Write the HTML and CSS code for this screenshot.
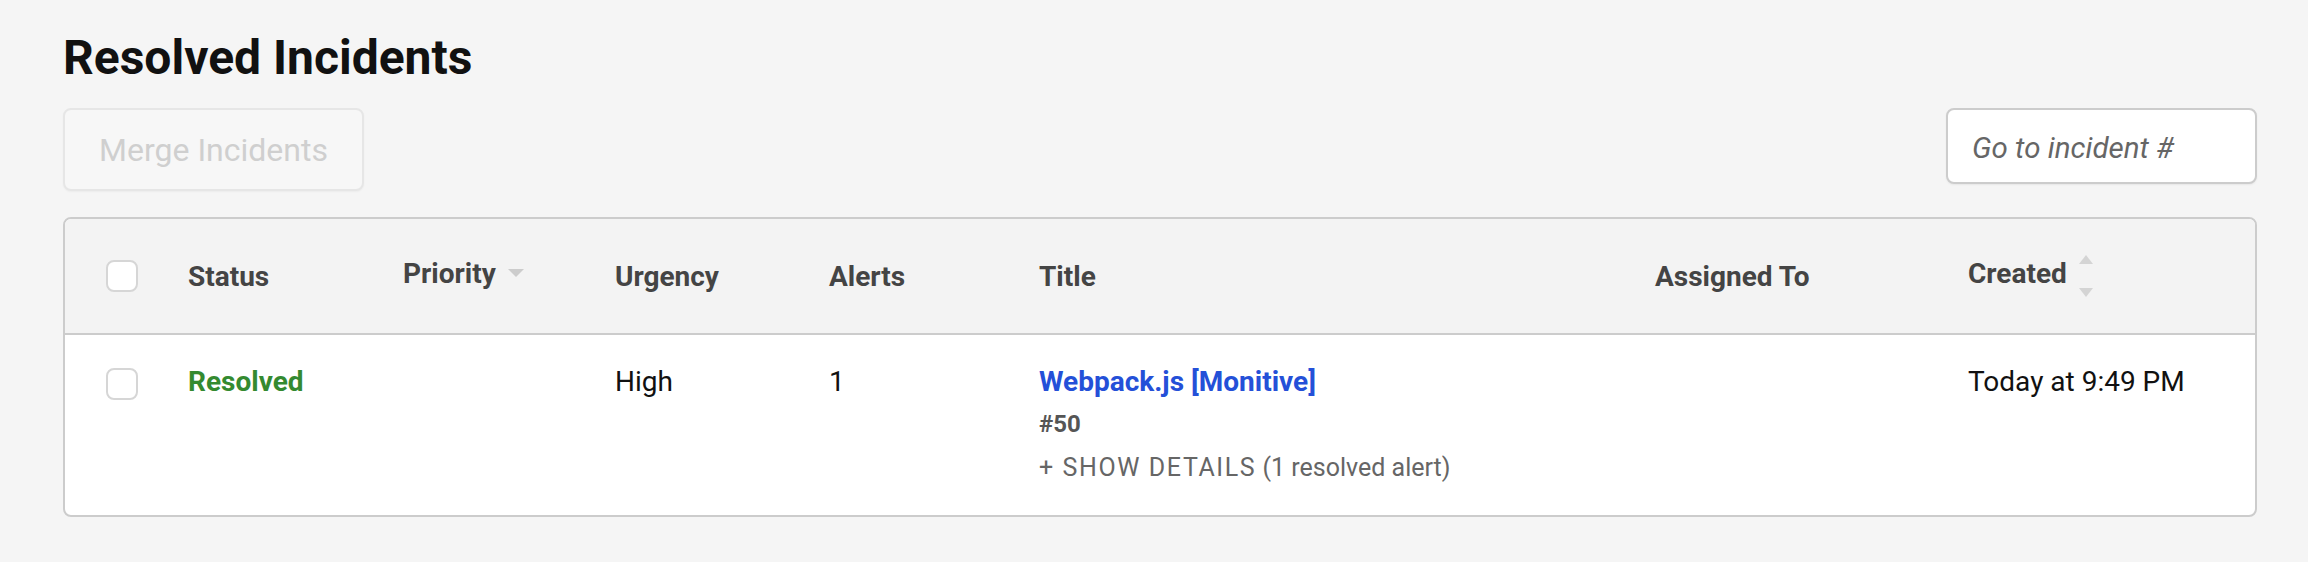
FILE: index.html
```html
<!DOCTYPE html>
<html>
<head>
<meta charset="utf-8">
<link rel="stylesheet" href="styles.css">
</head>
<body>
<div class="page">
  <h1 class="title">Resolved Incidents</h1>
  <div class="toolbar">
    <button class="merge" disabled>Merge Incidents</button>
    <input class="goto" type="text" placeholder="Go to incident #">
  </div>
  <div class="table">
    <div class="row head">
      <div class="cell"><span class="check"></span></div>
      <div class="cell">Status</div>
      <div class="cell sortable">Priority <span class="tri down"></span></div>
      <div class="cell">Urgency</div>
      <div class="cell">Alerts</div>
      <div class="cell">Title</div>
      <div class="cell">Assigned To</div>
      <div class="cell sortable">Created <span class="arrows"><span class="tri up"></span><span class="tri down"></span></span></div>
    </div>
    <div class="row body">
      <div class="cell"><span class="check"></span></div>
      <div class="cell status">Resolved</div>
      <div class="cell"></div>
      <div class="cell">High</div>
      <div class="cell">1</div>
      <div class="cell titlecell">
        <a class="inc-link">Webpack.js [Monitive]</a>
        <div class="inc-num">#50</div>
        <div class="details"><span class="caps">+ SHOW DETAILS</span> (1 resolved alert)</div>
      </div>
      <div class="cell"></div>
      <div class="cell">Today at 9:49 PM</div>
    </div>
  </div>
</div>
</body>
</html>
```
FILE: styles.css
```css
html, body {
  margin: 0;
  padding: 0;
  background: #f5f5f5;
  font-family: Roboto, "Liberation Sans", sans-serif;
  color: #111;
}
.page {
  padding: 30px 51px 0 63px;
}
.title {
  margin: 0;
  font-size: 48px;
  line-height: 56px;
  font-weight: 700;
  color: #111;
}
.toolbar {
  display: flex;
  justify-content: space-between;
  align-items: flex-start;
  margin-top: 22px;
}
.merge {
  width: 301px;
  height: 83px;
  background: #f7f7f7;
  border: 2px solid #e6e6e6;
  border-radius: 8px;
  color: #cfcfcf;
  font-family: Roboto, "Liberation Sans", sans-serif;
  font-size: 32px;
  padding: 0;
  box-shadow: 0 1px 2px rgba(0,0,0,0.04);
}
.goto {
  width: 311px;
  height: 76px;
  box-sizing: border-box;
  border: 2px solid #cccccc;
  border-radius: 8px;
  background: #fff;
  padding: 4px 24px 0;
  font-family: Roboto, "Liberation Sans", sans-serif;
  font-size: 29.5px;
  box-shadow: 0 1px 2px rgba(0,0,0,0.06);
}
.goto::placeholder {
  color: #666;
  font-style: italic;
}
.table {
  margin-top: 26px;
  border: 2px solid #cccccc;
  border-radius: 8px;
  overflow: hidden;
  background: #fff;
}
.row {
  display: grid;
  grid-template-columns: 123px 215px 212px 214px 210px 616px 313px 1fr;
}
.head {
  height: 114px;
  background: #f3f3f3;
  border-bottom: 2px solid #cccccc;
  align-items: center;
  font-weight: 700;
  font-size: 28px;
  color: #444;
}
.head .cell:first-child, .body .cell:first-child {
  padding-left: 41px;
}
.body {
  height: 180px;
  align-items: start;
  font-size: 28px;
  line-height: 40px;
  padding-top: 27px;
  box-sizing: border-box;
}
.cell {
  display: flex;
  align-items: center;
}
.body .cell {
  display: block;
}
.check {
  display: block;
  width: 28px;
  height: 28px;
  border: 2px solid #d6d6d6;
  border-radius: 8px;
  background: #fff;
}
.body .check {
  margin-top: 6px;
}
.sortable {
  gap: 12px;
  margin-top: -6px;
}
.tri {
  display: block;
  width: 0;
  height: 0;
  border-left: 8px solid transparent;
  border-right: 8px solid transparent;
}
.tri.down {
  border-top: 8px solid #cccccc;
}
.tri.up {
  border-bottom: 9px solid #d4d4d4;
}
.arrows {
  display: flex;
  flex-direction: column;
  gap: 24px;
  margin-top: 6px;
}
.arrows .tri.down {
  border-top: 9px solid #d4d4d4;
  border-left-width: 7px;
  border-right-width: 7px;
}
.arrows .tri.up {
  border-left-width: 7px;
  border-right-width: 7px;
}
.status {
  color: #348a30;
  font-weight: 700;
}
.inc-link {
  display: block;
  color: #2450d8;
  font-weight: 700;
}
.inc-num {
  margin-top: 4px;
  font-size: 24px;
  line-height: 36px;
  font-weight: 700;
  color: #555;
}
.details {
  margin-top: 8px;
  font-size: 25px;
  line-height: 36px;
  color: #666;
}
.caps {
  letter-spacing: 1.6px;
}
```
